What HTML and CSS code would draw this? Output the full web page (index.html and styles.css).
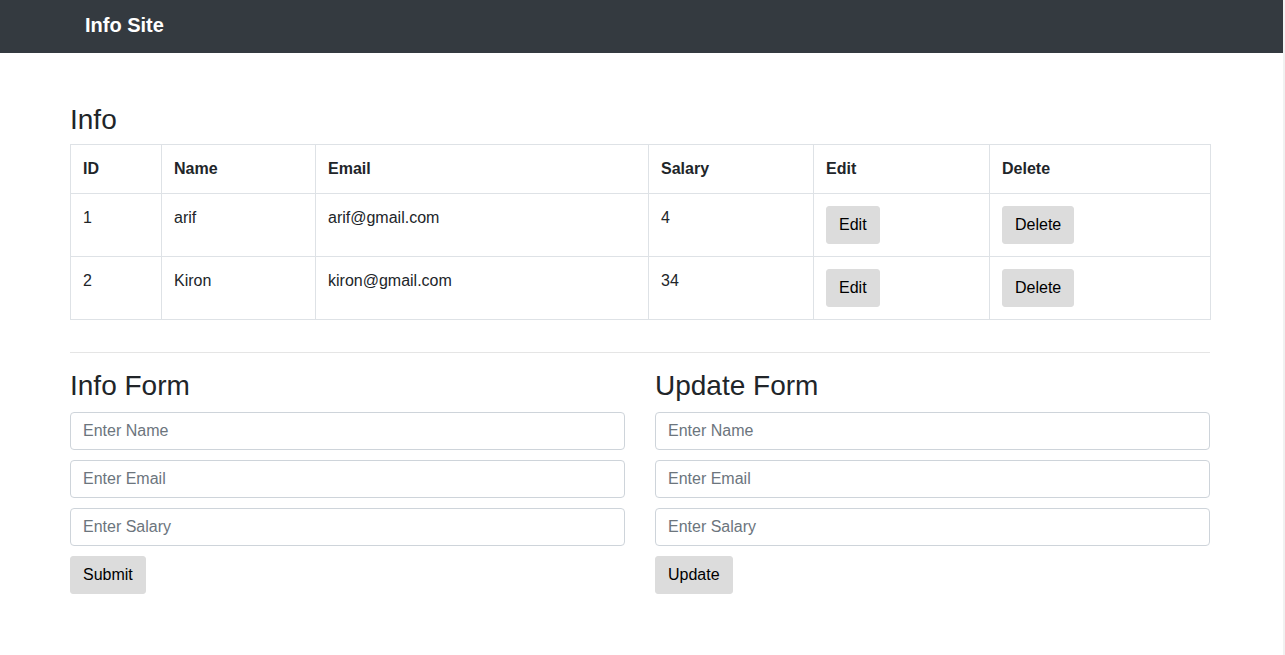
FILE: index.html
```html
<!DOCTYPE html>
<html lang="en">
<head>
<meta charset="utf-8">
<title>Info Site</title>
<link rel="stylesheet" href="styles.css">
</head>
<body>
<nav class="navbar">
  <div class="container">
    <a class="brand" href="#">Info Site</a>
  </div>
</nav>
<main class="container main">
  <h3 class="title title-top">Info</h3>
  <table class="info-table">
    <colgroup>
      <col class="c-id"><col class="c-name"><col class="c-email"><col class="c-salary"><col class="c-edit"><col class="c-del">
    </colgroup>
    <thead>
      <tr><th>ID</th><th>Name</th><th>Email</th><th>Salary</th><th>Edit</th><th>Delete</th></tr>
    </thead>
    <tbody>
      <tr><td>1</td><td>arif</td><td>arif@gmail.com</td><td>4</td><td><button class="btn">Edit</button></td><td><button class="btn">Delete</button></td></tr>
      <tr><td>2</td><td>Kiron</td><td>kiron@gmail.com</td><td>34</td><td><button class="btn">Edit</button></td><td><button class="btn">Delete</button></td></tr>
    </tbody>
  </table>
  <hr class="divider">
  <div class="forms">
    <form class="form">
      <h3 class="title">Info Form</h3>
      <input class="field" type="text" placeholder="Enter Name">
      <input class="field" type="text" placeholder="Enter Email">
      <input class="field" type="text" placeholder="Enter Salary">
      <div><button class="btn" type="button">Submit</button></div>
    </form>
    <form class="form">
      <h3 class="title">Update Form</h3>
      <input class="field" type="text" placeholder="Enter Name">
      <input class="field" type="text" placeholder="Enter Email">
      <input class="field" type="text" placeholder="Enter Salary">
      <div><button class="btn" type="button">Update</button></div>
    </form>
  </div>
</main>
</body>
</html>
```

FILE: styles.css
```css
* { box-sizing: border-box; }
html { background: #f1f1f1; }
body {
  margin: 0 2px 0 0;
  min-height: 100vh;
  background: #fff;
  font-family: "Liberation Sans", Arial, sans-serif;
  font-size: 16px;
  line-height: 1.5;
  color: #212529;
}
.container {
  width: 1140px;
  margin-left: 70px;
}
.navbar {
  background: #343a40;
  height: 53px;
  padding-top: 10px;
}
.navbar .container { padding: 0 15px; }
.brand {
  color: #fff;
  font-size: 20px;
  font-weight: bold;
  line-height: 30px;
  text-decoration: none;
}
.main { padding-top: 50px; }
.title {
  margin: 0 0 8px;
  font-size: 28px;
  font-weight: 500;
  line-height: 1.2;
}
.title-top { margin-bottom: 7px; }
.info-table {
  width: 100%;
  border-collapse: collapse;
  table-layout: fixed;
  margin-bottom: 16px;
}
.c-id { width: 91px; }
.c-name { width: 154px; }
.c-email { width: 333px; }
.c-salary { width: 165px; }
.c-edit { width: 176px; }
.c-del { width: 221px; }
.info-table th, .info-table td {
  border: 1px solid #dee2e6;
  padding: 12px;
  text-align: left;
  vertical-align: top;
}
.info-table th { font-weight: bold; vertical-align: bottom; }
.btn {
  font-family: inherit;
  font-size: 16px;
  line-height: 24px;
  color: #000;
  background: #dcdcdc;
  border: 1px solid #dcdcdc;
  border-radius: 3px;
  padding: 6px 12px;
  cursor: pointer;
}
.divider {
  margin: 32px 0 16px;
  border: 0;
  border-top: 1px solid rgba(0,0,0,.1);
}
.forms {
  display: grid;
  grid-template-columns: 1fr 1fr;
  column-gap: 30px;
}
.form {
  display: flex;
  flex-direction: column;
  gap: 10px;
}
.form .title { margin-bottom: 0; }
.field {
  display: block;
  width: 100%;
  height: 38px;
  padding: 6px 12px;
  font-family: inherit;
  font-size: 16px;
  line-height: 24px;
  color: #495057;
  border: 1px solid #ced4da;
  border-radius: 4px;
  background: #fff;
}
.field::placeholder { color: #6c757d; opacity: 1; }
```
